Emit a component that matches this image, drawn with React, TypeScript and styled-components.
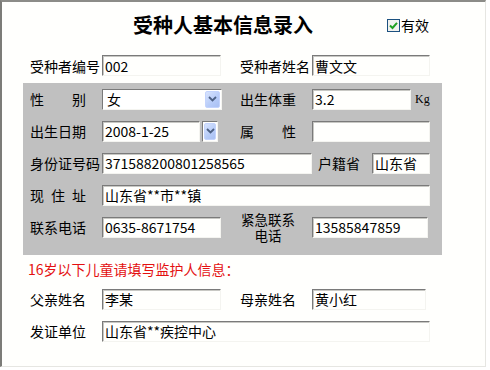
import React from "react";
import styled, { createGlobalStyle } from "styled-components";

const GlobalStyle = createGlobalStyle`
  * { box-sizing: border-box; }
  body {
    margin: 0;
    background: #ffffff;
    font-family: "Noto Sans CJK SC", "Noto Sans", sans-serif;
    font-size: 14px;
    color: #000;
  }
`;

const Frame = styled.div`
  width: 486px;
  height: 367px;
  border-top: 2px solid #8c8c88;
  border-left: 2px solid #7c7c78;
  border-right: 1px solid #e6e6e2;
  border-bottom: 1px solid #e6e6e2;
  background: #fffffd;
  padding-left: 21px;
`;

const Header = styled.div`
  height: 46px;
  display: flex;
  align-items: center;
  padding-left: 110px;
`;

const Title = styled.h1`
  margin: 0;
  font-size: 20px;
  font-weight: 700;
  line-height: 20px;
  width: 254px;
`;

const Check = styled.label`
  display: flex;
  align-items: center;
  gap: 1px;
  font-size: 14px;
  line-height: 14px;
`;

const Panel = styled.div`
  width: 419px;
  background: #c0c0c0;
  padding-bottom: 12px;
`;

const Row = styled.div<{ $h?: number }>`
  display: flex;
  align-items: center;
  height: ${(p) => p.$h ?? 32}px;
  padding-left: 7px;
`;

const Label = styled.span<{ $w?: number; $spread?: boolean }>`
  flex-shrink: 0;
  width: ${(p) => (p.$spread ? 56 : p.$w ?? 72)}px;
  margin-right: ${(p) => (p.$spread ? 16 : 0)}px;
  white-space: nowrap;
  line-height: 16px;
  text-align: left;
  text-align-last: ${(p) => (p.$spread ? "justify" : "auto")};
`;

const TwoLine = styled.span`
  flex-shrink: 0;
  width: 56px;
  margin-right: 16px;
  font-size: 13.5px;
  line-height: 16px;
  text-align: center;
`;

const Col = styled.div<{ $w: number }>`
  flex-shrink: 0;
  width: ${(p) => p.$w}px;
  display: flex;
  align-items: center;
`;

const TextBox = styled.input<{ $w: number }>`
  width: ${(p) => p.$w}px;
  height: 21px;
  margin: 0;
  padding: 0 2px;
  border: 1px solid;
  border-color: #7a7a7a #f4f4f0 #f4f4f0 #7a7a7a;
  box-shadow: inset 1px 1px 0 #c8c8c4;
  background: #fffffd;
  font-family: "Noto Sans CJK SC", "Noto Sans", sans-serif;
  font-size: 14px;
  color: #000;
  outline: none;
`;

const SelectBox = styled.div<{ $w: number }>`
  width: ${(p) => p.$w}px;
  height: 21px;
  display: flex;
  align-items: center;
  justify-content: space-between;
  padding: 1px 1px 1px 4px;
  border: 1px solid;
  border-color: #7a7a7a #f4f4f0 #f4f4f0 #7a7a7a;
  background: #ffffff;
  line-height: 16px;
`;

const DropButton = styled.span`
  width: 15px;
  height: 17px;
  display: flex;
  align-items: center;
  justify-content: center;
  border: 1px solid #c3d3fd;
  border-radius: 2px;
  background: linear-gradient(135deg, #d8e4fe 0%, #b6cbf8 60%, #a9c0f3 100%);
`;

const DateButton = styled.div`
  width: 16px;
  height: 21px;
  margin-left: 2px;
  padding: 1px;
  border: 1px solid;
  border-color: #7a7a7a #f4f4f0 #f4f4f0 #7a7a7a;
  background: #ffffff;
  display: flex;
`;

const Unit = styled.span`
  margin-left: 4px;
  font-family: "Liberation Serif", serif;
  font-size: 12px;
`;

const Spacer = styled.span<{ $w: number }>`
  flex-shrink: 0;
  width: ${(p) => p.$w}px;
`;

const Note = styled.div`
  height: 28px;
  padding-left: 5px;
  display: flex;
  align-items: center;
  color: #e41010;
  font-size: 14px;
`;

const Chevron = () => (
  <svg width="9" height="6" viewBox="0 0 9 6">
    <polyline points="1,1 4.5,4.5 8,1" fill="none" stroke="#4d6185" strokeWidth="1.8" />
  </svg>
);

const Drop = () => (
  <DropButton>
    <Chevron />
  </DropButton>
);

const CheckIcon = () => (
  <svg width="13" height="13" viewBox="0 0 13 13">
    <rect x="0.5" y="0.5" width="12" height="12" fill="#f2f2ee" stroke="#1c5180" />
    <polyline points="3,6.5 5.5,9 10,3.8" fill="none" stroke="#21a121" strokeWidth="2" />
  </svg>
);

const Field = ({ w, value = "" }: { w: number; value?: string }) => (
  <TextBox $w={w} readOnly value={value} />
);

export default function App() {
  return (
    <>
      <GlobalStyle />
      <Frame>
        <Header>
          <Title>受种人基本信息录入</Title>
          <Check>
            <CheckIcon />
            有效
          </Check>
        </Header>

        <Row $h={35}>
          <Label>受种者编号</Label>
          <Col $w={138}>
            <Field w={119} value="002" />
          </Col>
          <Label>受种者姓名</Label>
          <Field w={118} value="曹文文" />
        </Row>

        <Panel>
          <Row>
            <Label $spread>性别</Label>
            <Col $w={138}>
              <SelectBox $w={120}>
                女
                <Drop />
              </SelectBox>
            </Col>
            <Label $spread>出生体重</Label>
            <Field w={99} value="3.2" />
            <Unit>Kg</Unit>
          </Row>

          <Row>
            <Label $spread>出生日期</Label>
            <Col $w={138}>
              <Field w={98} value="2008-1-25" />
              <DateButton>
                <Drop />
              </DateButton>
            </Col>
            <Label $spread>属性</Label>
            <Field w={118} />
          </Row>

          <Row>
            <Label>身份证号码</Label>
            <Field w={210} value="371588200801258565" />
            <Spacer $w={6} />
            <Label $w={54}>户籍省</Label>
            <Field w={58} value="山东省" />
          </Row>

          <Row>
            <Label $spread>现住址</Label>
            <Field w={328} value="山东省**市**镇" />
          </Row>

          <Row>
            <Label $spread>联系电话</Label>
            <Col $w={138}>
              <Field w={119} value="0635-8671754" />
            </Col>
            <TwoLine>
              紧急联系
              <br />
              电话
            </TwoLine>
            <Field w={116} value="13585847859" />
          </Row>
        </Panel>

        <Note>16岁以下儿童请填写监护人信息：</Note>

        <Row>
          <Label $spread>父亲姓名</Label>
          <Col $w={138}>
            <Field w={119} value="李某" />
          </Col>
          <Label $spread>母亲姓名</Label>
          <Field w={114} value="黄小红" />
        </Row>

        <Row>
          <Label $spread>发证单位</Label>
          <Field w={328} value="山东省**疾控中心" />
        </Row>
      </Frame>
    </>
  );
}
